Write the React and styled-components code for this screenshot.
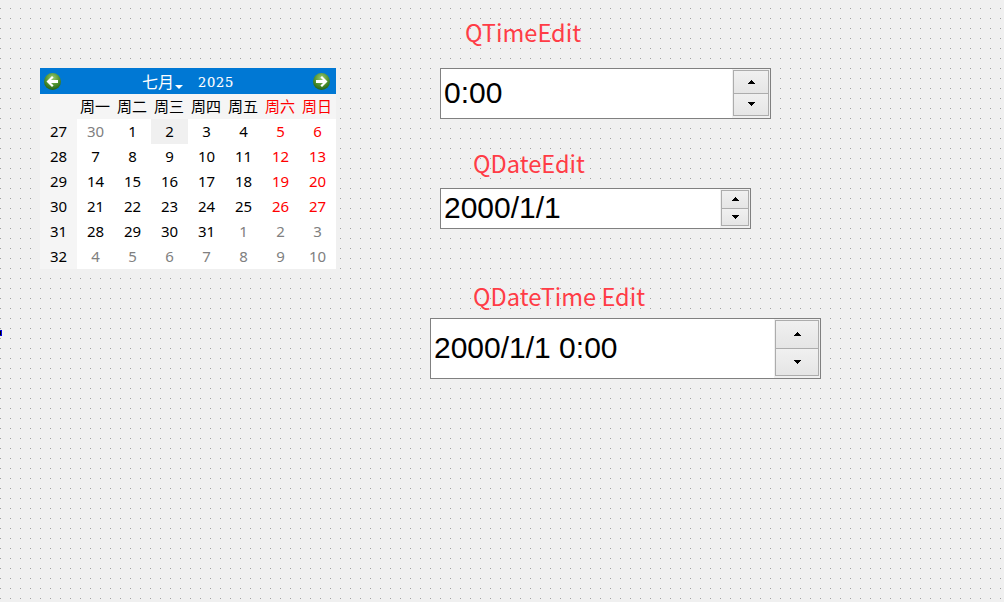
import React from "react";
import styled, { createGlobalStyle } from "styled-components";

const Global = createGlobalStyle`
  html, body { margin: 0; padding: 0; }
  body { background: #f0f0f0; overflow: hidden; }
`;

const Page = styled.div`
  position: relative;
  width: 1004px;
  height: 602px;
  display: flex;
  align-items: flex-start;
  background-color: #f0f0f0;
  background-image:
    linear-gradient(to bottom, #f0f0f0 8px, transparent 8px, transparent 9px, #f0f0f0 9px),
    linear-gradient(to right, #a0a0a0 1px, #f0f0f0 1px);
  background-size: 10px 10px;
`;

const Marker = styled.i`
  position: absolute;
  left: 0;
  top: 330px;
  width: 2px;
  height: 6px;
  background: #000;
  border: solid #0000e0;
  border-width: 1px 1px 1px 0;
  box-sizing: border-box;
`;

const Calendar = styled.div`
  width: 296px;
  margin: 68px 0 0 40px;
  background: #fff;
  font-family: "Noto Sans", "Noto Sans CJK SC", sans-serif;
  flex: none;
`;

const NavBar = styled.div`
  height: 26px;
  padding: 0 6px 0 4px;
  background: #0078d4;
  display: flex;
  align-items: center;
  justify-content: space-between;
  color: #fff;
`;

const Title = styled.div`
  display: flex;
  align-items: center;
  margin: 3px 0 0 2px;
`;

const Month = styled.span`
  margin-top: -3px;
  font-family: "Noto Sans CJK SC", sans-serif;
  font-size: 16px;
  line-height: 24px;
`;

const Caret = styled.span`
  width: 0;
  height: 0;
  margin: 9px 0 0 1px;
  border: solid transparent;
  border-width: 4px 4px 0;
  border-top-color: #fff;
`;

const Year = styled.span`
  margin-left: 15px;
  font-family: "DejaVu Serif", serif;
  font-size: 13px;
  letter-spacing: 0.7px;
  line-height: 24px;
  -webkit-text-stroke: 0.15px #fff;
`;

const Grid = styled.div`
  display: grid;
  grid-template-columns: repeat(8, 37px);
  grid-auto-rows: 25px;
`;

const Cell = styled.div`
  display: flex;
  align-items: center;
  justify-content: center;
  padding: 0 ${(p) => (p.$head ? 1 : 0)}px 1px 0;
  box-sizing: border-box;
  font-family: ${(p) => (p.$head ? '"Noto Sans CJK SC", sans-serif' : "inherit")};
  font-size: 15px;
  line-height: 24px;
  background: ${(p) => (p.$side ? "#f5f5f5" : p.$today ? "#f0f0f0" : "#fff")};
  color: ${(p) => (p.$tone === "red" ? "#ff0000" : p.$tone === "gray" ? "#808080" : "#000")};
`;

const Forms = styled.div`
  margin-left: 94px;
  display: flex;
  flex-direction: column;
  align-items: flex-start;
`;

const Label = styled.div`
  margin-left: ${(p) => p.$x}px;
  margin-top: ${(p) => p.$top}px;
  height: 30px;
  font-family: "Noto Sans CJK SC", "Noto Sans", sans-serif;
  font-size: 23.6px;
  line-height: 30px;
  color: #ff3c46;
`;

const Edit = styled.div`
  margin-left: ${(p) => p.$x}px;
  margin-top: ${(p) => p.$top}px;
  width: ${(p) => p.$w}px;
  height: ${(p) => p.$h}px;
  box-sizing: border-box;
  border: 1px solid #808080;
  background: #fff;
  display: flex;
  align-items: stretch;
`;

const Value = styled.div`
  flex: 1;
  padding: 0 0 2px 3px;
  box-sizing: border-box;
  display: flex;
  align-items: center;
  font-family: "Liberation Sans", Arial, sans-serif;
  font-size: 30px;
  color: #000;
`;

const Spin = styled.div`
  width: ${(p) => p.$w}px;
  padding: 1px 1px 2px 1px;
  background: #f0f0f0;
  display: flex;
  flex-direction: column;
  box-sizing: border-box;
`;

const SpinButton = styled.div`
  flex: 1;
  box-sizing: border-box;
  border: 1px solid #acacac;
  border-top-width: ${(p) => (p.$down ? 0 : 1)}px;
  background: linear-gradient(#f0f0f0, #e5e5e5);
  display: flex;
  align-items: center;
  justify-content: center;
`;

const Tri = styled.svg`
  display: block;
  width: 7px;
  height: 4px;
  shape-rendering: crispEdges;
`;

const Up = () => (
  <Tri viewBox="0 0 7 4"><path d="M3 0 H4 V1 H5 V2 H6 V3 H7 V4 H0 V3 H1 V2 H2 V1 H3 Z" fill="#000" /></Tri>
);
const Down = () => (
  <Tri viewBox="0 0 7 4"><path d="M0 0 H7 V1 H6 V2 H5 V3 H4 V4 H3 V3 H2 V2 H1 V1 H0 Z" fill="#000" /></Tri>
);

const NavSvg = styled.svg`
  display: block;
  width: 17px;
  height: 17px;
`;

const NavIcon = ({ dir, id }) => (
  <NavSvg viewBox="0 0 17 17">
    <defs>
      <radialGradient id={id} cx="50%" cy="30%" r="75%">
        <stop offset="0%" stopColor="#9ccb72" />
        <stop offset="55%" stopColor="#4f9230" />
        <stop offset="100%" stopColor="#1c5a12" />
      </radialGradient>
    </defs>
    <circle cx="8.5" cy="8.5" r="8.5" fill={`url(#${id})`} />
    <path
      d={dir === "left" ? "M2.5 8.5 L8 3 L9.6 4.6 L7 7 H14 V10 H7 L9.6 12.4 L8 14 Z" : "M14.5 8.5 L9 3 L7.4 4.6 L10 7 H3 V10 H10 L7.4 12.4 L9 14 Z"}
      fill="#fff"
    />
  </NavSvg>
);

const weekdays = [
  ["周一"], ["周二"], ["周三"], ["周四"], ["周五"], ["周六", "red"], ["周日", "red"],
];

const rows = [
  [27, [30, 1, 2, 3, 4, 5, 6]],
  [28, [7, 8, 9, 10, 11, 12, 13]],
  [29, [14, 15, 16, 17, 18, 19, 20]],
  [30, [21, 22, 23, 24, 25, 26, 27]],
  [31, [28, 29, 30, 31, 1, 2, 3]],
  [32, [4, 5, 6, 7, 8, 9, 10]],
];

const toneOf = (r, c, d) => {
  if ((r === 0 && d === 30) || (r === 4 && d < 10) || r === 5) return "gray";
  return c >= 5 ? "red" : "black";
};

const SpinBox = ({ w }) => (
  <Spin $w={w}>
    <SpinButton><Up /></SpinButton>
    <SpinButton $down><Down /></SpinButton>
  </Spin>
);

export default function App() {
  return (
    <Page>
      <Global />
      <Marker />
      <Calendar>
        <NavBar>
          <NavIcon dir="left" id="navl" />
          <Title>
            <Month>七月</Month>
            <Caret />
            <Year>2025</Year>
          </Title>
          <NavIcon dir="right" id="navr" />
        </NavBar>
        <Grid>
          <Cell $side />
          {weekdays.map(([d, t]) => (
            <Cell key={d} $side $head $tone={t}>{d}</Cell>
          ))}
          {rows.map(([wk, days], r) => (
            <React.Fragment key={wk}>
              <Cell $side>{wk}</Cell>
              {days.map((d, c) => (
                <Cell key={c} $today={r === 0 && d === 2} $tone={toneOf(r, c, d)}>{d}</Cell>
              ))}
            </React.Fragment>
          ))}
        </Grid>
      </Calendar>
      <Forms>
        <Label $x={35} $top={17}>QTimeEdit</Label>
        <Edit $x={10} $top={21} $w={331} $h={51}>
          <Value>0:00</Value>
          <SpinBox w={38} />
        </Edit>
        <Label $x={43} $top={29}>QDateEdit</Label>
        <Edit $x={10} $top={10} $w={311} $h={41}>
          <Value>2000/1/1</Value>
          <SpinBox w={30} />
        </Edit>
        <Label $x={43} $top={52}>QDateTime Edit</Label>
        <Edit $x={0} $top={7} $w={391} $h={61}>
          <Value>2000/1/1 0:00</Value>
          <SpinBox w={46} />
        </Edit>
      </Forms>
    </Page>
  );
}
